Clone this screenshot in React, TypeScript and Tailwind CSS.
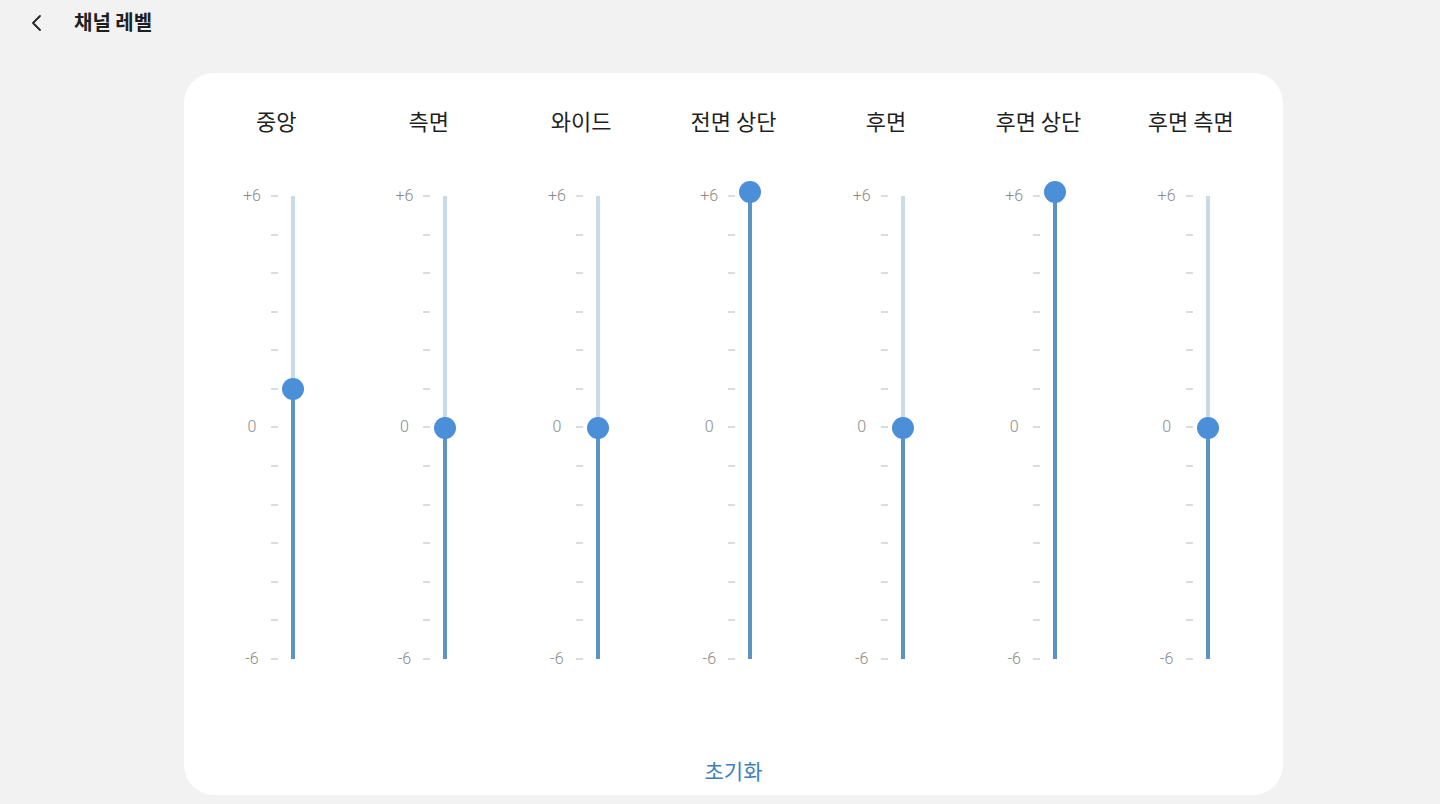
import React, { useState } from "react";

const CHANNELS = [
  { name: "중앙", value: 1 },
  { name: "측면", value: 0 },
  { name: "와이드", value: 0 },
  { name: "전면 상단", value: 6 },
  { name: "후면", value: 0 },
  { name: "후면 상단", value: 6 },
  { name: "후면 측면", value: 0 },
];

const TRACK_H = 463;
const STEP = TRACK_H / 12;

function ChannelSlider({ name, value }: { name: string; value: number }) {
  // thumb sits a little above the top tick at the max value
  const top = (6 - value) * STEP - (value === 6 ? 4 : 0);

  return (
    <div className="flex flex-col items-center">
      <div className="h-7 text-[22px] leading-7 text-[#1f1f1f] text-center w-full">{name}</div>

      <div className="mt-[62px] flex w-full">
        {/* scale */}
        <div className="w-[78px] h-[463px] flex flex-col justify-between">
          {Array.from({ length: 13 }).map((_, i) => (
            <div key={i} className="h-0 flex items-center">
              <span className="ml-[33px] w-[38px] text-center text-[16px] leading-5 font-light text-[#8a8a8a] [font-family:Roboto,sans-serif]">
                {i === 0 ? "+6" : i === 6 ? "0" : i === 12 ? "-6" : ""}
              </span>
              <span className="w-[7px] h-[2px] bg-[#dcdcdc]" />
            </div>
          ))}
        </div>

        {/* track */}
        <div className="ml-[13px] relative w-1 h-[463px] flex flex-col">
          <div className="bg-[#c8dbeb]" style={{ height: Math.max(top, 0) }} />
          <div className="flex-1 bg-[#5b93c3]" />
          <div
            className="absolute left-1/2 -translate-x-1/2 -translate-y-1/2 w-[22px] h-[22px] rounded-full bg-[#4a8fd8]"
            style={{ top }}
          />
        </div>
      </div>
    </div>
  );
}

export default function App() {
  const [channels] = useState(CHANNELS);

  return (
    <div className="min-h-[804px] w-full bg-[#f2f2f2] font-['Noto_Sans_CJK_KR','Noto_Sans',sans-serif]">
      {/* Header */}
      <div className="h-11 flex items-center pl-[30px]">
        <svg width="14" height="18" viewBox="0 0 14 18" fill="none" className="mt-[1px]">
          <path d="M10 2 L3 9 L10 16" stroke="#222" strokeWidth="1.8" strokeLinecap="round" strokeLinejoin="round" />
        </svg>
        <h1 className="ml-[30px] text-[20px] font-bold text-[#1f1f1f] leading-7">채널 레벨</h1>
      </div>

      {/* Card */}
      <div className="ml-[184px] mt-[29px] w-[1099px] h-[722px] bg-white rounded-[30px] px-4 pt-[33px] flex flex-col">
        <div className="grid grid-cols-7">
          {channels.map((c) => (
            <ChannelSlider key={c.name} name={c.name} value={c.value} />
          ))}
        </div>
        <div className="mt-[97px] text-center text-[21px] leading-7 text-[#3d7fbd]">초기화</div>
      </div>
    </div>
  );
}
